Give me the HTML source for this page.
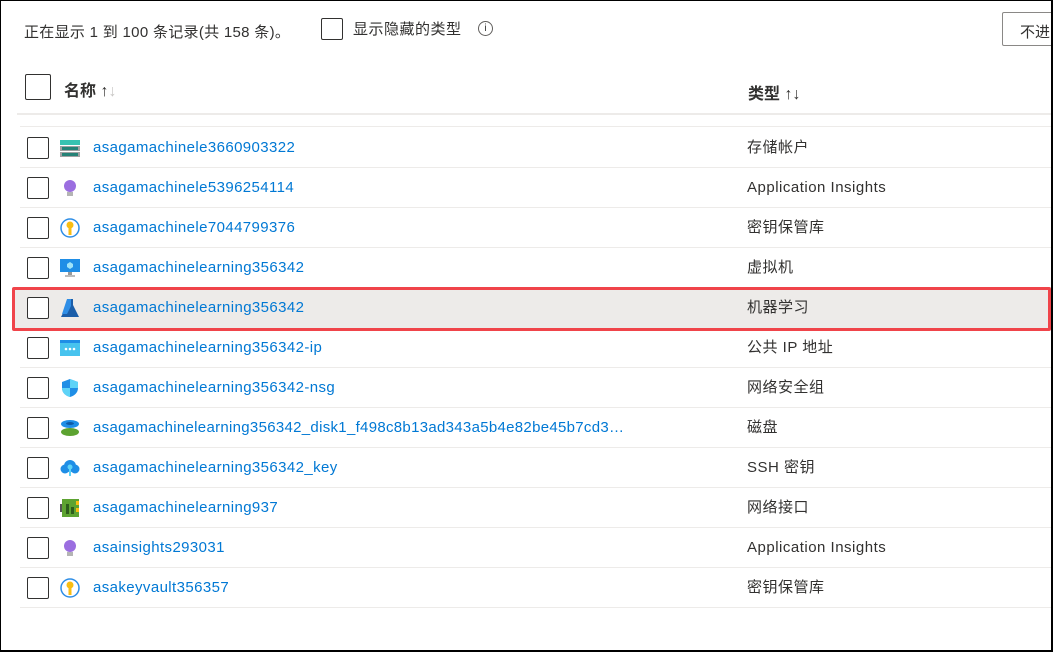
<!DOCTYPE html>
<html><head><meta charset="utf-8"><style>
*{margin:0;padding:0;box-sizing:border-box}
body{width:1053px;height:652px;overflow:hidden;background:#fff;font-family:"Liberation Sans","Noto Sans CJK SC",sans-serif;font-size:15px;color:#323130;position:relative}
.frame{position:absolute;left:0;top:0;width:1053px;height:652px;border:1px solid #000;border-right:2px solid #000;border-bottom:2px solid #000}
.a{position:absolute}
.cb{position:absolute;width:22px;height:22px;border:1px solid #323130;border-radius:2px;background:#fff}
.row{position:absolute;left:20px;width:1033px;height:40px;border-bottom:1px solid #edebe9}
.row .cb{left:7px;top:9px}
.row .ic{position:absolute;left:40px;top:10px;width:20px;height:20px}
.row .n{position:absolute;left:73px;top:0;line-height:40px;color:#0078d4;white-space:nowrap;letter-spacing:0.4px}
.row .t{position:absolute;left:727px;top:0;line-height:40px;white-space:nowrap;letter-spacing:0.5px}
</style></head><body>
<div class="a" style="left:24px;top:21px;letter-spacing:0.3px">正在显示 1 到 100 条记录(共 158 条)。</div>
<div class="cb" style="left:321px;top:18px"></div>
<div class="a" style="left:353px;top:18px;letter-spacing:0.5px">显示隐藏的类型</div>
<div class="a" style="left:478px;top:21px;width:15px;height:15px;border:1px solid #605e5c;border-radius:50%;font-size:10px;text-align:center;line-height:13px">i</div>
<div class="a" style="left:1002px;top:12px;width:60px;height:34px;border:1px solid #8a8886;border-radius:2px;padding:8px 0 0 17px">不进</div>
<div class="cb" style="left:25px;top:74px;width:26px;height:26px"></div>
<div class="a" style="left:64px;top:77px;font-weight:bold;font-size:16px">名称 <span style="font-weight:normal;font-size:16px">↑<span style="color:#c8c6c4">↓</span></span></div>
<div class="a" style="left:748px;top:80px;font-weight:bold;font-size:16px">类型 <span style="font-weight:normal;font-size:16px">↑↓</span></div>
<div class="a" style="left:17px;top:113px;width:1036px;height:2px;background:#edebe9"></div>
<div class="a" style="left:20px;top:126px;width:1033px;height:1px;background:#edebe9"></div>

<div class="row" style="top:128px"><div class="cb"></div><svg class="ic" viewBox="0 0 20 20"><rect x="0" y="2" width="20" height="5" fill="#37c2b1"/><rect x="0" y="8" width="20" height="5" fill="#a0a1a2"/><rect x="0" y="14" width="20" height="5" fill="#a0a1a2"/><rect x="2" y="9" width="16" height="3" fill="#258277"/><rect x="2" y="15" width="16" height="3" fill="#258277"/></svg><div class="n">asagamachinele3660903322</div><div class="t">存储帐户</div></div>
<div class="row" style="top:168px"><div class="cb"></div><svg class="ic" viewBox="0 0 20 20"><circle cx="10" cy="8" r="6" fill="#9b6ee0"/><rect x="7" y="14" width="6" height="4" fill="#b4b4b4"/></svg><div class="n">asagamachinele5396254114</div><div class="t">Application Insights</div></div>
<div class="row" style="top:208px"><div class="cb"></div><svg class="ic" viewBox="0 0 20 20"><circle cx="10" cy="10" r="9" fill="#fff" stroke="#2f8ee6" stroke-width="1.5"/><circle cx="10" cy="7" r="3.5" fill="#f9bd12"/><rect x="8.5" y="9" width="3" height="8" fill="#f9bd12"/></svg><div class="n">asagamachinele7044799376</div><div class="t">密钥保管库</div></div>
<div class="row" style="top:248px"><div class="cb"></div><svg class="ic" viewBox="0 0 20 20"><rect x="0" y="1" width="20" height="13" fill="#1f8ee6"/><rect x="8" y="14" width="4" height="3" fill="#999"/><rect x="5" y="17" width="10" height="2" fill="#bbb"/><path d="M10 4l3 2v3l-3 2-3-2V6z" fill="#9fe3f8"/></svg><div class="n">asagamachinelearning356342</div><div class="t">虚拟机</div></div>
<div class="a" style="left:12px;top:287px;width:1039px;height:44px;border:3px solid #f0444a;border-radius:2px;background:#edebe9"></div>
<div class="row" style="top:288px;border:none"><div class="cb"></div><svg class="ic" viewBox="0 0 20 20"><path d="M7 1h6v6l6 12H1L7 7z" fill="#1b5ea9"/><path d="M7 1h4v7l-4 8H2z" fill="#2f8ee6"/></svg><div class="n">asagamachinelearning356342</div><div class="t">机器学习</div></div>
<div class="row" style="top:328px"><div class="cb"></div><svg class="ic" viewBox="0 0 20 20"><rect x="0" y="2" width="20" height="16" fill="#47c3ee"/><rect x="0" y="2" width="20" height="3" fill="#1f8ee6"/><circle cx="6" cy="11" r="1.3" fill="#fff"/><circle cx="10" cy="11" r="1.3" fill="#fff"/><circle cx="14" cy="11" r="1.3" fill="#fff"/></svg><div class="n">asagamachinelearning356342-ip</div><div class="t">公共 IP 地址</div></div>
<div class="row" style="top:368px"><div class="cb"></div><svg class="ic" viewBox="0 0 20 20"><path d="M10 1l8 3v6c0 5-4 8-8 9-4-1-8-4-8-9V4z" fill="#1f8ee6"/><path d="M10 1l8 3v6H10zM10 10v9c-4-1-8-4-8-9z" fill="#5ed3f7"/></svg><div class="n">asagamachinelearning356342-nsg</div><div class="t">网络安全组</div></div>
<div class="row" style="top:408px"><div class="cb"></div><svg class="ic" viewBox="0 0 20 20"><ellipse cx="10" cy="14" rx="9" ry="4" fill="#5da331"/><ellipse cx="10" cy="6" rx="9" ry="4" fill="#1f8ee6"/><ellipse cx="10" cy="5.5" rx="4" ry="1.5" fill="#0f5aa6"/></svg><div class="n" style="letter-spacing:0.3px">asagamachinelearning356342_disk1_f498c8b13ad343a5b4e82be45b7cd3…</div><div class="t">磁盘</div></div>
<div class="row" style="top:448px"><div class="cb"></div><svg class="ic" viewBox="0 0 20 20"><circle cx="10" cy="8" r="6" fill="#1f8ee6"/><circle cx="5" cy="11" r="4.5" fill="#1f8ee6"/><circle cx="15" cy="11" r="4.5" fill="#1f8ee6"/><circle cx="10" cy="9" r="2.5" fill="#5ed3f7"/><rect x="9" y="10" width="2" height="8" fill="#5ed3f7"/></svg><div class="n">asagamachinelearning356342_key</div><div class="t">SSH 密钥</div></div>
<div class="row" style="top:488px"><div class="cb"></div><svg class="ic" viewBox="0 0 20 20"><rect x="0" y="6" width="3" height="8" fill="#555"/><rect x="2" y="1" width="17" height="18" fill="#5da331"/><rect x="16" y="3" width="3" height="4" fill="#f9bd12"/><rect x="16" y="10" width="3" height="4" fill="#f9bd12"/><rect x="6" y="6" width="3" height="10" fill="#2d5d1c"/><rect x="11" y="9" width="3" height="7" fill="#2d5d1c"/></svg><div class="n">asagamachinelearning937</div><div class="t">网络接口</div></div>
<div class="row" style="top:528px"><div class="cb"></div><svg class="ic" viewBox="0 0 20 20"><circle cx="10" cy="8" r="6" fill="#9b6ee0"/><rect x="7" y="14" width="6" height="4" fill="#b4b4b4"/></svg><div class="n">asainsights293031</div><div class="t">Application Insights</div></div>
<div class="row" style="top:568px"><div class="cb"></div><svg class="ic" viewBox="0 0 20 20"><circle cx="10" cy="10" r="9" fill="#fff" stroke="#2f8ee6" stroke-width="1.5"/><circle cx="10" cy="7" r="3.5" fill="#f9bd12"/><rect x="8.5" y="9" width="3" height="8" fill="#f9bd12"/></svg><div class="n">asakeyvault356357</div><div class="t">密钥保管库</div></div>
<div class="frame"></div>
</body></html>
